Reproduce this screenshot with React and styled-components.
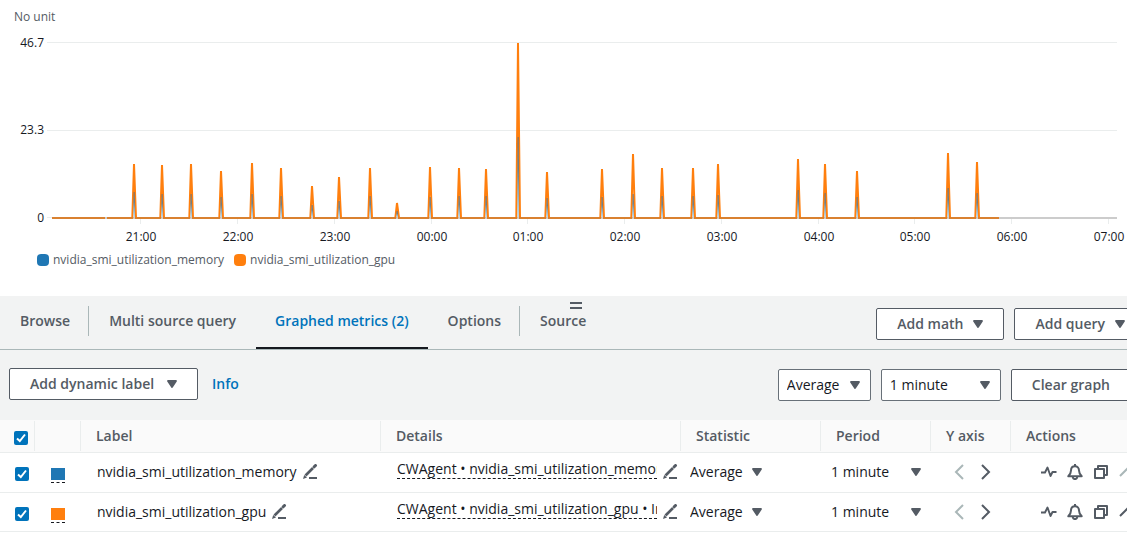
import React from "react";
import styled, { createGlobalStyle } from "styled-components";

const GlobalStyle = createGlobalStyle`
  * { box-sizing: border-box; }
  body {
    margin: 0;
    background: #fff;
    color: #16191f;
    font: 14px/20px "Open Sans", "Noto Sans", sans-serif;
    overflow-x: hidden;
  }
  button, select, input { font: inherit; color: inherit; margin: 0; }
`;

const Page = styled.main`
  overflow: hidden;
`;

/* ---------- graph ---------- */

const Graph = styled.section`
  height: 296px;
  padding-top: 8px;
  font-size: 12px;
  line-height: 18px;
  overflow: hidden;
`;

const UnitLabel = styled.div`
  padding-left: 14px;
  color: #545b64;
`;

const Plot = styled.svg`
  display: block;
  width: 100%;
  text {
    font-size: 12px;
    fill: #16191f;
  }
`;

const Legend = styled.ul`
  display: flex;
  gap: 10px;
  margin: 0;
  padding: 0 0 0 37px;
  list-style: none;
  color: #545b64;
`;

const LegendItem = styled.li`
  display: flex;
  align-items: center;
  gap: 4px;
  &::before {
    content: "";
    width: 12px;
    height: 12px;
    border-radius: 4px;
    background: ${(p) => p.$color};
  }
`;

const BLUE = "#1f77b4";
const ORANGE = "#ff7f0e";
const BASE = 192;

// [x, gpu height, memory height]
const SPIKES = [
  [134, 54, 26], [162, 53, 24], [191, 54, 24], [221, 47, 21], [252, 55, 24],
  [281, 50, 22], [312, 32, 13], [339, 41, 17], [370, 50, 22], [397, 15, 7],
  [430, 51, 21], [459, 50, 22], [486, 49, 22], [518, 175, 81], [547, 46, 20],
  [602, 49, 21], [633, 64, 24], [662, 50, 22], [693, 50, 22], [718, 54, 23],
  [798, 59, 28], [825, 54, 25], [857, 47, 21], [948, 65, 30], [977, 56, 25],
];

const HOURS = [
  [141, "21:00"], [238, "22:00"], [335, "23:00"], [432, "00:00"],
  [528, "01:00"], [625, "02:00"], [722, "03:00"], [819, "04:00"],
  [915, "05:00"], [1012, "06:00"], [1109, "07:00"],
];

function GpuSlopes() {
  return (
    <g fill="none" stroke={ORANGE} strokeWidth="2" strokeLinejoin="bevel">
      {SPIKES.map(([x, gpu]) => (
        <path key={x} d={`M${x - 1.7} ${BASE}L${x} ${BASE - gpu}L${x + 2} ${BASE}`} />
      ))}
    </g>
  );
}

function MemorySlopes() {
  return (
    <g fill="url(#memory)">
      {SPIKES.map(([x, , memory]) => {
        const top = BASE - memory;
        return <path key={x} d={`M${x - 0.4} ${top}H${x + 0.7}L${x + 1} ${BASE - 1}H${x - 0.7}Z`} />;
      })}
    </g>
  );
}

function Baseline({ color }) {
  const stops = SPIKES.map(([x]) => `H${x - 1}M${x + 1} ${BASE}`).join("");
  return <path d={`M52 ${BASE}H105M107 ${BASE}${stops}H999`} stroke={color} strokeWidth="2" strokeOpacity="0.8" />;
}

function Chart() {
  return (
    <Plot viewBox="0 0 1127 225" role="img" aria-label="Metric utilization over time">
      <defs>
        <linearGradient id="memory" x2="0" y2="1">
          <stop offset="0" stopColor="#5a6c78" stopOpacity="0.8" />
          <stop offset="0.4" stopColor="#4d7288" />
          <stop offset="1" stopColor="#b9d8ea" />
        </linearGradient>
      </defs>
      <path d="M47 16.5H1117M47 104.5H1117M47 191.5H52" stroke="#eaeded" />
      <path d="M52 192H1117" stroke="#ccc" strokeWidth="2" />
      <text x="44" y="21" textAnchor="end">46.7</text>
      <text x="44" y="108" textAnchor="end">23.3</text>
      <text x="44" y="196" textAnchor="end">0</text>
      {HOURS.map(([x, label]) => (
        <g key={label}>
          <path d={`M${x - 0.5} 193V198`} stroke="#eaeded" />
          <text x={x} y="215" textAnchor="middle">{label}</text>
        </g>
      ))}
      <GpuSlopes />
      <MemorySlopes />
      <Baseline color={BLUE} />
      <Baseline color={ORANGE} />
    </Plot>
  );
}

/* ---------- panel ---------- */

const Panel = styled.section`
  position: relative;
  width: calc(100% + 24px);
  background: #f2f3f3;
`;

const ResizeHandle = styled.button`
  position: absolute;
  top: 6px;
  left: 50%;
  width: 12px;
  height: 7px;
  margin-left: -6px;
  padding: 0;
  border: solid #545b64;
  border-width: 2px 0;
  background: none;
`;

const TabBar = styled.div`
  display: flex;
  justify-content: space-between;
  height: 54px;
  padding-right: 5px;
  border-bottom: 1px solid #aab7b8;
`;

const Tabs = styled.div`
  display: flex;
  gap: 1px;
  padding-left: 1px;
`;

const Tab = styled.button`
  position: relative;
  padding: 0 19px 1px;
  border: 0;
  border-bottom: 2px solid ${(p) => (p.$active ? "#16191f" : "transparent")};
  background: none;
  color: ${(p) => (p.$active ? "#0073bb" : "#545b64")};
  font-weight: 600;
  white-space: nowrap;
  & + &::before {
    content: "";
    position: absolute;
    left: -2px;
    top: 10px;
    height: 30px;
    border-left: 1px solid #aab7b8;
  }
`;

const ButtonGroup = styled.div`
  display: flex;
  align-items: center;
  gap: 10px;
  padding-top: ${(p) => p.$top ?? 0}px;
`;

const Button = styled.button`
  display: flex;
  align-items: center;
  justify-content: space-between;
  gap: 10px;
  min-width: ${(p) => p.$minWidth ?? 0}px;
  height: 32px;
  padding: 0 20px;
  border: 1px solid #545b64;
  border-radius: 2px;
  background: #fff;
  color: #545b64;
  font-weight: 600;
  white-space: nowrap;
`;

const Toolbar = styled.div`
  display: flex;
  justify-content: space-between;
  align-items: flex-start;
  height: 70px;
  padding: 18px 20px 0 9px;
`;

const InfoLink = styled.a`
  margin-left: 4px;
  color: #0073bb;
  font-weight: 600;
  text-decoration: none;
`;

const Picker = styled.span`
  display: inline-grid;
  align-items: center;
  width: ${(p) => p.$width}px;
  height: 32px;
  select {
    grid-area: 1 / 1;
    width: 100%;
    height: 100%;
    padding: 0 8px;
    border: 1px solid ${(p) => (p.$plain ? "transparent" : "#687078")};
    border-radius: 2px;
    background: ${(p) => (p.$plain ? "transparent" : "#fff")};
    appearance: none;
  }
  svg {
    grid-area: 1 / 1;
    justify-self: end;
    margin-right: 11px;
    pointer-events: none;
  }
`;

const Caret = () => (
  <svg width="10" height="8" viewBox="0 0 10 8" aria-hidden="true">
    <path d="M1 1H9L5 7Z" fill="#545b64" stroke="#545b64" strokeWidth="1.800" strokeLinejoin="round" />
  </svg>
);

function Select({ label, options, width, plain }) {
  return (
    <Picker $width={width} $plain={plain}>
      <select aria-label={label}>
        {options.map((o) => <option key={o}>{o}</option>)}
      </select>
      <Caret />
    </Picker>
  );
}

/* ---------- table ---------- */

const Table = styled.table`
  width: 100%;
  table-layout: fixed;
  border-collapse: separate;
  border-spacing: 0;
  background: #fff;
`;

const Th = styled.th`
  height: 33px;
  padding: 0 0 0 ${(p) => p.$pad ?? 15}px;
  border-bottom: 1px solid #eaeded;
  background: linear-gradient(#eaeded, #eaeded) right 0 top 1px / ${(p) => (p.$last ? 0 : 1)}px 30px no-repeat #fafafa;
  color: #545b64;
  font-weight: 600;
  text-align: left;
`;

const Td = styled.td`
  height: 40px;
  padding: 0 0 1px ${(p) => p.$pad ?? 16}px;
  border-bottom: 1px solid #eaeded;
  white-space: nowrap;
  tr:last-child > & {
    height: 39px;
    padding-bottom: 0;
  }
`;

const Line = styled.div`
  display: flex;
  align-items: center;
  gap: ${(p) => p.$gap ?? 5}px;
`;

const Check = styled.label`
  display: grid;
  width: 14px;
  height: 14px;
  margin-top: 3px;
  input, svg { grid-area: 1 / 1; width: 14px; height: 14px; }
  input {
    appearance: none;
    border-radius: 2px;
    background: #0073bb;
  }
  svg { pointer-events: none; z-index: 1; }
`;

const Swatch = styled.button`
  display: block;
  width: 14px;
  height: 15px;
  margin-top: 6px;
  padding: 0;
  border: 0;
  border-bottom: 1px dashed #16191f;
  background: linear-gradient(${(p) => p.$color}, ${(p) => p.$color}) top / 14px 12px no-repeat;
`;

const Details = styled.span`
  width: 260px;
  margin-bottom: 6px;
  border-bottom: 1px dashed #16191f;
  line-height: 18px;
  overflow: hidden;
`;

const IconButton = styled.button`
  display: block;
  flex: none;
  padding: 0;
  border: 0;
  background: none;
  color: ${(p) => (p.disabled ? "#aab7b8" : "#545b64")};
  svg {
    display: block;
    width: 16px;
    height: 16px;
    fill: none;
    stroke: currentColor;
    stroke-width: 2;
  }
`;

const ICONS = {
  edit: (
    <>
      <path d="M3.500 11.500L11 4" strokeWidth="2.600" />
      <path d="M12.200 2.800L13.500 1.500" strokeWidth="3" strokeLinecap="round" />
      <path d="M1 15L2.200 11L5 13.500Z" fill="currentColor" stroke="none" />
      <path d="M7 14H15" />
    </>
  ),
  left: <path d="M12 1L5 8L12 15" />,
  right: <path d="M5 1L12 8L5 15" />,
  pulse: <path d="M0 8.500H4L6.500 3.500L9.500 12L11.500 8H15.500" strokeWidth="1.900" strokeLinejoin="round" />,
  bell: (
    <>
      <path d="M8 0V2" />
      <path d="M1.300 12.200H14.700C13 10.500 12 9 12 6.500C12 3.800 10.300 2.200 8 2.200S4 3.800 4 6.500C4 9 3 10.500 1.300 12.200Z" strokeLinejoin="round" />
      <path d="M5.800 13C6 15.800 10 15.800 10.200 13" />
    </>
  ),
  copy: (
    <>
      <path d="M2 5H11V14H2Z" strokeLinejoin="round" />
      <path d="M5 5V2H14V11H11" strokeLinejoin="round" />
    </>
  ),
  up: <path d="M1 12L8 5L15 12" />,
};

function Icon({ name, label, disabled }) {
  return (
    <IconButton aria-label={label} disabled={disabled}>
      <svg viewBox="0 0 16 16" aria-hidden="true">{ICONS[name]}</svg>
    </IconButton>
  );
}

function CheckBox({ label }) {
  return (
    <Check>
      <input type="checkbox" defaultChecked aria-label={label} />
      <svg viewBox="0 0 14 14" aria-hidden="true">
        <path d="M3 7.500L5.800 10L11 3.500" fill="none" stroke="#fff" strokeWidth="2" />
      </svg>
    </Check>
  );
}

const METRICS = [
  {
    name: "nvidia_smi_utilization_memory",
    color: BLUE,
    details: "CWAgent • nvidia_smi_utilization_memory",
    first: true,
  },
  {
    name: "nvidia_smi_utilization_gpu",
    color: ORANGE,
    details: "CWAgent • nvidia_smi_utilization_gpu • InstanceId",
  },
];

const COLUMNS = [35, 46, 300, 300, 140, 110, 80];
const HEADINGS = ["Label", "Details", "Statistic", "Period", "Y axis", "Actions"];

function MetricRow({ metric }) {
  return (
    <tr>
      <Td $pad={15}><CheckBox label={`Show ${metric.name}`} /></Td>
      <Td><Swatch $color={metric.color} aria-label="Change color" /></Td>
      <Td>
        <Line>
          {metric.name}
          <Icon name="edit" label="Edit label" />
        </Line>
      </Td>
      <Td>
        <Line>
          <Details>{metric.details}</Details>
          <Icon name="edit" label="Edit details" />
        </Line>
      </Td>
      <Td $pad={0}><Select label="Statistic" options={["Average"]} width={92} plain /></Td>
      <Td $pad={1}><Select label="Period" options={["1 minute"]} width={110} plain /></Td>
      <Td $pad={20}>
        <Line $gap={10}>
          <Icon name="left" label="Move to left Y axis" disabled />
          <Icon name="right" label="Move to right Y axis" />
        </Line>
      </Td>
      <Td $pad={30}>
        <Line $gap={10}>
          <Icon name="pulse" label="Anomaly detection" />
          <Icon name="bell" label="Create alarm" />
          <Icon name="copy" label="Duplicate" />
          <Icon name="up" label="Move up" disabled={metric.first} />
        </Line>
      </Td>
    </tr>
  );
}

export default function App() {
  return (
    <Page>
      <GlobalStyle />
      <Graph>
        <UnitLabel>No unit</UnitLabel>
        <Chart />
        <Legend>
          {METRICS.map((m) => (
            <LegendItem key={m.name} $color={m.color}>{m.name}</LegendItem>
          ))}
        </Legend>
      </Graph>
      <Panel>
        <ResizeHandle aria-label="Resize panel" />
        <TabBar>
          <Tabs role="tablist">
            {["Browse", "Multi source query", "Graphed metrics (2)", "Options", "Source"].map((t, i) => (
              <Tab key={t} role="tab" aria-selected={i === 2} $active={i === 2}>{t}</Tab>
            ))}
          </Tabs>
          <ButtonGroup $top={2}>
            <Button>Add math <Caret /></Button>
            <Button>Add query <Caret /></Button>
          </ButtonGroup>
        </TabBar>
        <Toolbar>
          <ButtonGroup>
            <Button $minWidth={189}>Add dynamic label <Caret /></Button>
            <InfoLink href="#info">Info</InfoLink>
          </ButtonGroup>
          <ButtonGroup $top={1}>
            <Select label="Statistic for all" options={["Average"]} width={93} />
            <Select label="Period for all" options={["1 minute"]} width={120} />
            <Button>Clear graph</Button>
          </ButtonGroup>
        </Toolbar>
        <Table>
          <colgroup>
            {COLUMNS.map((w, i) => <col key={i} width={w} />)}
            <col />
          </colgroup>
          <thead>
            <tr>
              <Th $pad={14}><CheckBox label="Show all metrics" /></Th>
              <Th aria-label="Color" />
              {HEADINGS.map((h) => <Th key={h} scope="col" $last={h === "Actions"}>{h}</Th>)}
            </tr>
          </thead>
          <tbody>
            {METRICS.map((m) => <MetricRow key={m.name} metric={m} />)}
          </tbody>
        </Table>
      </Panel>
    </Page>
  );
}
